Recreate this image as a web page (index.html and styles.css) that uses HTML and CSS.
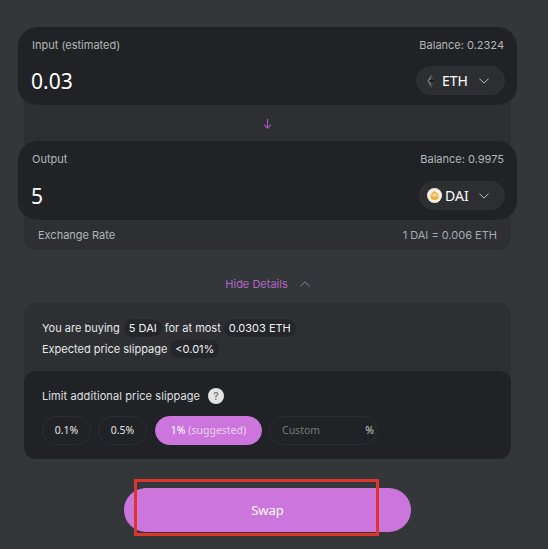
FILE: index.html
```html
<!DOCTYPE html>
<html lang="en">
<head>
<meta charset="utf-8">
<title>Swap</title>
<link rel="stylesheet" href="styles.css">
</head>
<body>
<main class="page">
  <section class="exchange">
    <div class="card">
      <div class="card-row labels"><span>Input (estimated)</span><span>Balance: 0.2324</span></div>
      <div class="card-row values">
        <span class="amount">0.03</span>
        <button class="token token-eth">
          <svg class="eth-icon" viewBox="0 0 10 16" width="9" height="14"><path d="M5 0 0 8l5 8z" fill="#6a6b70"/><path d="M5 0v16l4-8z" fill="#3a3b40"/><path d="M5 6 2 8l3 2 4-2z" fill="#18191b"/></svg>
          <span class="token-name">ETH</span>
          <svg class="chev" viewBox="0 0 12 7" width="10" height="6"><path d="M.5.7 6 6 11.500.7" fill="none" stroke="#d8d8da"/></svg>
        </button>
      </div>
    </div>
    <div class="arrow-row">
      <svg viewBox="0 0 9 10" width="9" height="10"><path d="M4.500 0v9M1 5.600l3.500 3.600L8 5.600" fill="none" stroke="#a55fb5" stroke-width="1.1"/></svg>
    </div>
    <div class="card card-output">
      <div class="card-row labels"><span>Output</span><span>Balance: 0.9975</span></div>
      <div class="card-row values">
        <span class="amount">5</span>
        <button class="token token-dai">
          <svg class="dai-icon" viewBox="0 0 16 16" width="15" height="15"><circle cx="8" cy="8" r="8" fill="#f6efe4"/><path d="M8 2.800 13 8H3z" fill="#f5ac37"/><path d="M3 8.800h10L10.800 12.600H5.200z" fill="#f5ac37"/><path d="M8 5.200 10.400 7.600H5.600z" fill="#f6efe4"/></svg>
          <span class="token-name">DAI</span>
          <svg class="chev" viewBox="0 0 12 7" width="10" height="6"><path d="M.5.7 6 6 11.500.7" fill="none" stroke="#d8d8da"/></svg>
        </button>
      </div>
    </div>
    <div class="rate"><span>Exchange Rate</span><span class="rate-value">1 DAI = 0.006 ETH</span></div>
  </section>

  <div class="toggle">
    <span>Hide Details</span>
    <svg viewBox="0 0 12 7" width="10" height="6"><path d="M.5 6.300 6 1l5.500 5.300" fill="none" stroke="#a98bb2"/></svg>
  </div>

  <section class="details">
    <div class="summary">
      <p class="line">You are buying <b class="chip chip-first">5 DAI</b> for at most <b class="chip">0.0303 ETH</b></p>
      <p class="line">Expected price slippage <b class="chip">&lt;0.01%</b></p>
    </div>
    <div class="limit">
      <div class="limit-title"><span>Limit additional price slippage</span><span class="help">?</span></div>
      <div class="options">
        <span class="option">0.1%</span>
        <span class="option">0.5%</span>
        <span class="option active">1% <span class="dim">(suggested)</span></span>
        <span class="option custom"><span class="placeholder">Custom</span><span class="percent">%</span></span>
      </div>
    </div>
  </section>

  <div class="swap-wrap">
    <button class="swap">Swap</button>
    <div class="annotation"></div>
  </div>
</main>
</body>
</html>
```
FILE: styles.css
```css
* { box-sizing: border-box; }
html, body { margin: 0; padding: 0; }
body {
  width: 548px;
  height: 549px;
  overflow: hidden;
  background: #33373a;
  font-family: Inter, "Liberation Sans", sans-serif;
  color: #e6e6e8;
}
.page {
  padding: 27px 31px 0 18px;
  display: flex;
  flex-direction: column;
}
.exchange {
  position: relative;
  display: flex;
  flex-direction: column;
}
.exchange::before {
  content: "";
  position: absolute;
  left: 6px;
  right: 6px;
  top: 40px;
  bottom: 0;
  background: #2d2f33;
  border-radius: 0 0 12px 12px;
}
.card {
  position: relative;
  height: 79px;
  background: #212225;
  border-radius: 20px;
  border-bottom: 1px solid #303235;
  box-shadow: 0 0 1px #2b2d30;
  padding: 0 13px 0 14px;
}
.card-output { height: 80px; }
.card-row { display: flex; justify-content: space-between; align-items: center; }
.labels {
  height: 36px;
  font-size: 11px;
  color: #b4b6b9;
}
.values { height: 30px; align-items: flex-start; }
.card-output .values { margin-top: 1px; }
.amount {
  font-family: "Noto Sans", sans-serif;
  font-size: 21px;
  color: #fff;
  line-height: 30px;
  margin: 3px 0 0 -1px;
}
.token {
  display: flex;
  align-items: center;
  height: 29px;
  margin: 3px -1px 0 0;
  padding: 0;
  background: #2d2e32;
  border: 1px solid #2f3135;
  border-radius: 15px;
  color: #fff;
  font-family: "Noto Sans", sans-serif;
  font-size: 14px;
}
.token-eth { width: 89px; padding-left: 10px; }
.token-dai { width: 86px; padding-left: 7px; }
.eth-icon { margin-right: 6px; }
.dai-icon { margin-right: 3px; }
.token-name { line-height: 1; }
.chev { margin-left: auto; margin-right: 15px; }
.arrow-row {
  position: relative;
  height: 35px;
  display: flex;
  align-items: center;
  justify-content: center;
}
.rate {
  position: relative;
  height: 29px;
  margin: 0 6px;
  padding: 0 14px 1px;
  display: flex;
  justify-content: space-between;
  align-items: center;
  font-size: 11px;
  color: #b4b6b9;
}
.rate-value { color: #a6abb3; }
.toggle {
  margin-top: 26px;
  height: 16px;
  display: flex;
  align-items: center;
  justify-content: center;
  gap: 12px;
  font-size: 11px;
  color: #b465c6;
}
.details {
  margin: 11px 6px 0;
  border-radius: 12px;
  overflow: hidden;
  background: #2d2f33;
}
.summary { height: 68px; padding: 14px 18px 0; }
.line {
  margin: 0;
  height: 21px;
  display: flex;
  align-items: center;
  font-size: 11px;
  color: #e8e8ea;
}
.chip {
  font-weight: 400;
  background: #25262a;
  border-radius: 9px;
  padding: 0 5px;
  line-height: 18px;
  margin: 0 3px;
  color: #f0f0f2;
}
.chip-first { margin-left: 4px; }
.limit {
  height: 88px;
  background: #212225;
  border-radius: 12px;
  padding: 16px 18px 0;
}
.limit-title {
  display: flex;
  align-items: center;
  gap: 8px;
  height: 18px;
  font-size: 11px;
  letter-spacing: 0.1px;
  color: #dfe0e2;
}
.help {
  width: 16px;
  height: 16px;
  border-radius: 50%;
  background: #e4e4e4;
  color: #77787a;
  font-size: 10px;
  font-weight: 600;
  display: flex;
  align-items: center;
  justify-content: center;
}
.options { display: flex; gap: 7px; margin-top: 11px; }
.option {
  height: 29px;
  width: 49px;
  padding-bottom: 1px;
  border: 1px solid #2e2f33;
  border-radius: 15px;
  display: flex;
  align-items: center;
  justify-content: center;
  font-family: "Noto Sans", sans-serif;
  font-size: 10.5px;
  color: #e4e4e6;
}
.option.active {
  width: 107px;
  margin-left: 1px;
  background: #cb75dd;
  border-color: #cb75dd;
  color: #fff;
  white-space: pre-wrap;
}
.dim { color: #ecd0f2; }
.custom {
  width: 108px;
  justify-content: space-between;
  padding: 0 2px 1px 12px;
}
.placeholder { color: #77787b; }
.percent { color: #c4c5c8; }
.swap-wrap {
  position: relative;
  margin-top: 29px;
  margin-left: 106px;
  width: 287px;
}
.swap {
  display: block;
  width: 287px;
  height: 44px;
  border: 0;
  border-radius: 22px;
  background: #cb75dd;
  color: #fff;
  font-family: "Noto Sans", sans-serif;
  font-size: 13px;
  padding: 0;
}
.annotation {
  position: absolute;
  left: 10px;
  top: -9px;
  width: 245px;
  height: 57px;
  border: 3px solid #e0352b;
}
```
